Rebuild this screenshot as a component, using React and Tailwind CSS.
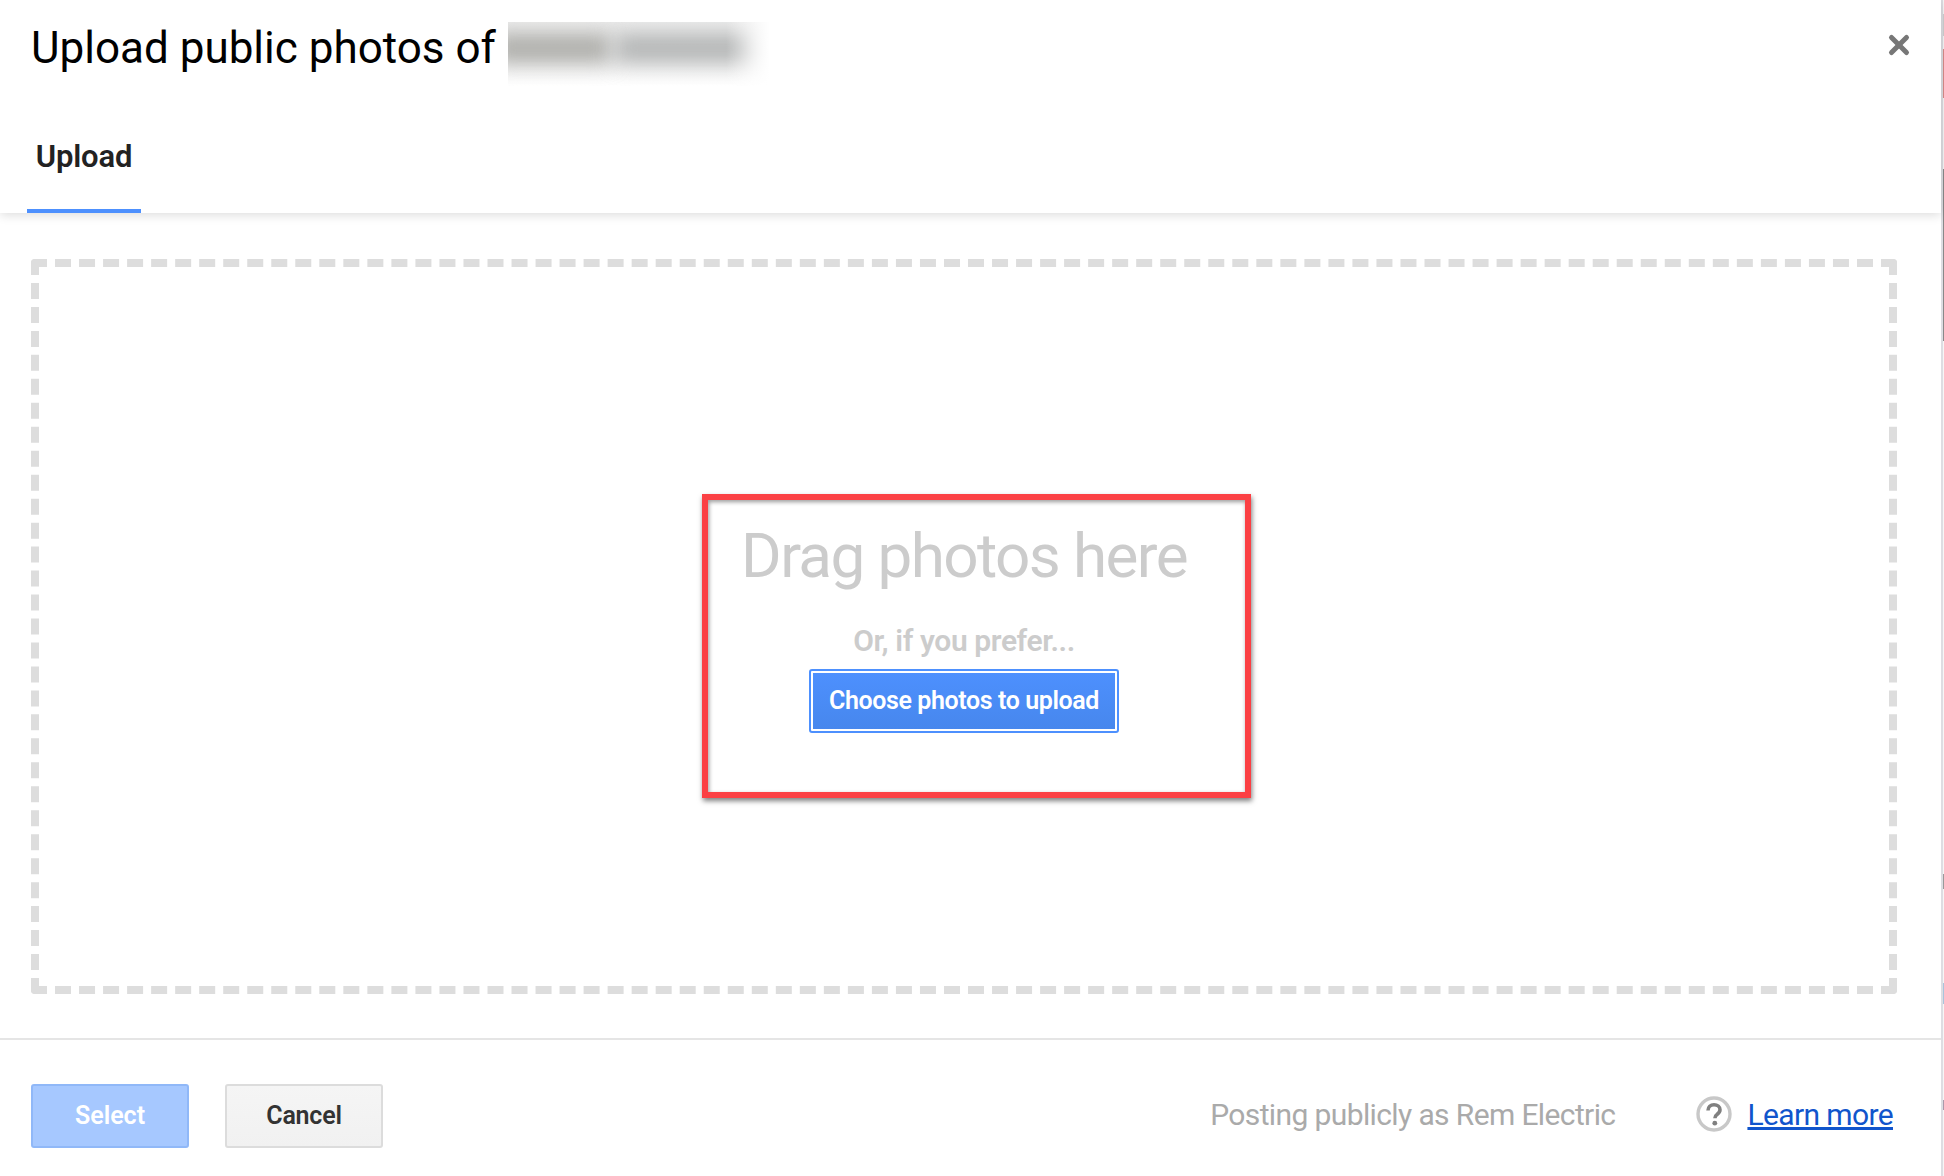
import React from 'react';
import { X } from 'lucide-react';

const roboto = 'font-[Roboto,sans-serif]';

function HelpIcon() {
  return (
    <svg viewBox="0 0 36 36" className="h-[36px] w-[36px] blur-[0.5px]">
      <circle cx="18" cy="18" r="16" fill="none" stroke="#c8c8c8" strokeWidth="3.400" />
      <path
        d="M12 14.500c0-3.400 2.600-5.800 6-5.800 3.400 0 6 2.100 6 5.100 0 2.400-1.400 3.500-3 4.700-1.400 1-2.100 1.900-2.100 3.700"
        fill="none"
        stroke="#808080"
        strokeWidth="3.600"
      />
      <circle cx="18.800" cy="27.200" r="2.400" fill="#808080" />
    </svg>
  );
}

export default function App() {
  return (
    <div className={`${roboto} flex h-[1176px] w-[1944px] overflow-hidden bg-white`}>
      <div className="flex w-[1941px] flex-col">
        {/* Header */}
        <div className="relative z-10 h-[213px] shadow-[0_2px_10px_rgba(0,0,0,0.14)]">
          <div className="flex h-[108px] items-start pl-[31px]">
            <h1 className="mt-[21px] text-[44px] leading-[54px] font-normal text-black">Upload public photos of</h1>
            {/* Blurred-out business name */}
            <div className="relative mt-[22px] ml-[12px] flex h-[64px] w-[262px] gap-[6px] overflow-hidden bg-gradient-to-b from-[#ececec] via-[#e8e8e8] to-white">
              <div className="mt-[12px] -ml-[14px] h-[28px] w-[116px] bg-[#aeaeaa] blur-[10px]" />
              <div className="mt-[12px] h-[28px] w-[136px] bg-[#b4b6b6] blur-[10px]" />
              <div className="absolute inset-y-0 right-0 w-[44px] bg-gradient-to-r from-transparent to-white" />
            </div>
            <X className="ml-auto mt-[30px] mr-[27px] h-[30px] w-[30px] text-[#777777]" strokeWidth={4} />
          </div>
          <div className="flex h-[105px] pl-[27px]">
            <div className="flex h-[105px] w-[114px] items-start justify-center border-b-4 border-[#4d90fe]">
              <span className="mt-[27px] text-[31px] leading-[44px] font-semibold tracking-[-0.2px] text-[#222222]">Upload</span>
            </div>
          </div>
        </div>

        {/* Drop area */}
        <div className="px-[31px] pt-[46px] pb-[44px] pr-[44px]">
          <div className="relative flex h-[735px] flex-col items-center rounded-[4px] border-8 border-dashed border-[#dddddd]">
            <div className="mt-[252px] text-[62px] leading-[74px] tracking-[-1.6px] text-[#cccccc]">Drag photos here</div>
            <div className="mt-[30px] text-[30px] leading-[36px] font-semibold tracking-[-0.4px] text-[#cccccc]">Or, if you prefer...</div>
            <button className="mt-[10px] h-[64px] w-[310px] rounded-[3px] border-2 border-[#4d90fe] p-[2px]">
              <span className="flex h-full w-full items-center justify-center bg-gradient-to-b from-[#4d90fe] to-[#4787ed] text-[25px] font-semibold tracking-[-0.4px] text-white">
                Choose photos to upload
              </span>
            </button>
            {/* Red annotation box */}
            <div className="absolute top-[227px] left-[663px] h-[304px] w-[549px] border-[6px] border-[#fb4044] shadow-[1px_3px_5px_rgba(0,0,0,0.5),inset_1px_2px_4px_rgba(0,0,0,0.4)]" />
          </div>
        </div>

        {/* Footer */}
        <div className="flex flex-1 items-start border-t-2 border-[#e5e5e5] pt-[44px] pl-[31px] pr-[48px]">
          <button className="h-[64px] w-[158px] rounded-[3px] border-2 border-[#90b8f8] bg-[#a6c8ff] text-[25px] font-semibold text-white">
            Select
          </button>
          <button className="ml-[36px] h-[64px] w-[158px] rounded-[3px] border-2 border-[#dcdcdc] bg-gradient-to-b from-[#f5f5f5] to-[#f1f1f1] text-[25px] font-semibold tracking-[-0.2px] text-[#333333]">
            Cancel
          </button>
          <div className="ml-auto flex h-[60px] items-center">
            <span className="text-[30px] tracking-[-0.62px] text-[#aaaaaa]">Posting publicly as Rem Electric</span>
            <span className="ml-[81px]"><HelpIcon /></span>
            <a className="ml-[15px] text-[30px] tracking-[-0.62px] text-[#1155cc] underline">Learn more</a>
          </div>
        </div>
      </div>

      {/* Sliver of the page behind the dialog */}
      <div className="flex w-[3px]">
        <div className="w-[2px] bg-[#dddde2]" />
        <div className="flex w-[1px] flex-col bg-[#f6f6f6]">
          <div className="mt-[14px] h-[22px] bg-[#cfcfcf]" />
          <div className="mt-[13px] h-[49px] bg-[#d98a88]" />
          <div className="mt-[71px] h-[172px] bg-[#888888]" />
          <div className="mt-[533px] h-[15px] bg-[#999999]" />
          <div className="mt-[94px] h-[21px] bg-[#a8c4dc]" />
          <div className="mt-[96px] h-[10px] bg-[#aa99aa]" />
        </div>
      </div>
    </div>
  );
}
